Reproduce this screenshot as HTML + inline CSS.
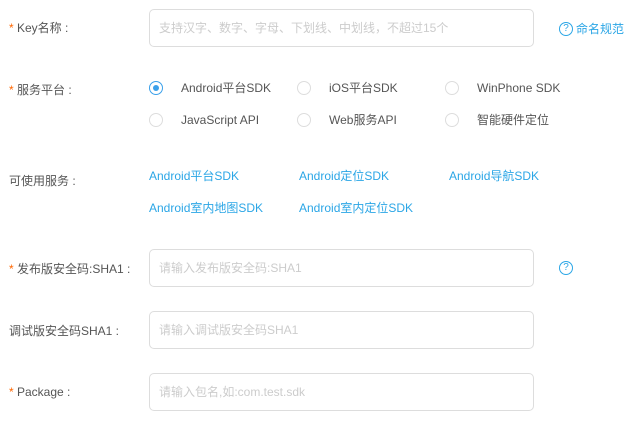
<!DOCTYPE html>
<html><head><meta charset="utf-8"><style>
body{margin:0;width:637px;height:424px;background:#fff;font-family:"Liberation Sans","Noto Sans CJK SC",sans-serif;font-size:12px;color:#555;position:relative;overflow:hidden}
.a{position:absolute;white-space:nowrap;line-height:16px;height:16px}
.req{color:#f60;}
.inp{position:absolute;left:149px;width:385px;height:38px;border:1px solid #ddd;border-radius:5px;box-sizing:border-box;color:#ccc;padding-left:9px;line-height:36px}
.r{position:absolute;width:14px;height:14px;border:1px solid #ddd;border-radius:50%;box-sizing:border-box}
.r.on{border-color:#3aa0ea}
.r.on:after{content:"";position:absolute;left:3px;top:3px;width:6px;height:6px;border-radius:50%;background:#3aa0ea}
.lk{color:#2ba6e6}
.q{position:absolute;width:14px;height:14px;box-sizing:border-box;border:1px solid #2ba6e6;border-radius:50%;font-size:10px;line-height:12px;text-align:center;color:#2ba6e6}
</style></head><body>
<div class="a" style="left:9px;top:20px"><span class="req">*</span> Key名称 :</div>
<div class="inp" style="top:9px">支持汉字、数字、字母、下划线、中划线，不超过15个</div>
<div class="q" style="left:559px;top:22px">?</div>
<div class="a lk" style="left:576px;top:21px">命名规范</div>

<div class="a" style="left:9px;top:82px"><span class="req">*</span> 服务平台 :</div>
<div class="r on" style="left:149px;top:81px"></div><div class="a" style="left:181px;top:80px">Android平台SDK</div>
<div class="r" style="left:297px;top:81px"></div><div class="a" style="left:329px;top:80px">iOS平台SDK</div>
<div class="r" style="left:445px;top:81px"></div><div class="a" style="left:477px;top:80px">WinPhone SDK</div>
<div class="r" style="left:149px;top:113px"></div><div class="a" style="left:181px;top:112px">JavaScript API</div>
<div class="r" style="left:297px;top:113px"></div><div class="a" style="left:329px;top:112px">Web服务API</div>
<div class="r" style="left:445px;top:113px"></div><div class="a" style="left:477px;top:112px">智能硬件定位</div>

<div class="a" style="left:9px;top:173px">可使用服务 :</div>
<div class="a lk" style="left:149px;top:168px">Android平台SDK</div>
<div class="a lk" style="left:299px;top:168px">Android定位SDK</div>
<div class="a lk" style="left:449px;top:168px">Android导航SDK</div>
<div class="a lk" style="left:149px;top:200px">Android室内地图SDK</div>
<div class="a lk" style="left:299px;top:200px">Android室内定位SDK</div>

<div class="a" style="left:9px;top:261px"><span class="req">*</span> 发布版安全码:SHA1 :</div>
<div class="inp" style="top:249px">请输入发布版安全码:SHA1</div>
<div class="q" style="left:559px;top:261px">?</div>

<div class="a" style="left:9px;top:323px">调试版安全码SHA1 :</div>
<div class="inp" style="top:311px">请输入调试版安全码SHA1</div>

<div class="a" style="left:9px;top:384px"><span class="req">*</span> Package :</div>
<div class="inp" style="top:373px">请输入包名,如:com.test.sdk</div>
</body></html>
